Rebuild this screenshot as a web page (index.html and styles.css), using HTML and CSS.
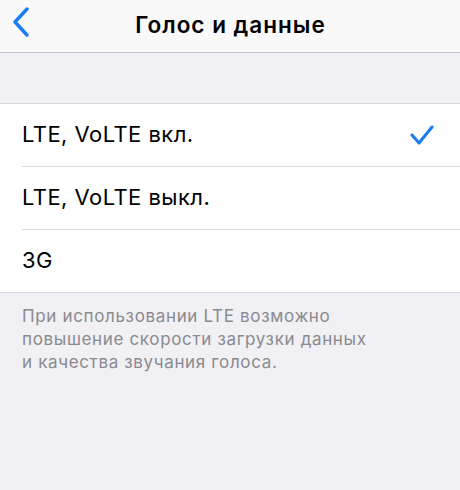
FILE: index.html
```
<!DOCTYPE html>
<html lang="ru">
<head>
    <meta charset="UTF-8">
    <meta name="viewport" content="width=device-width, initial-scale=1.0">
    <title>Голос и данные</title>
    <link rel="stylesheet" href="styles.css">
</head>
<body>
<div class="navbar">
    <a class="back" href="#">
        <svg width="20" height="30" viewBox="0 0 20 30">
            <path d="M16 2 L4 15 L16 28" fill="none" stroke="#1a7cf4" stroke-width="3.4" stroke-linecap="round" stroke-linejoin="round"/>
        </svg>
    </a>
    <div class="title">Голос и данные</div>
</div>

<div class="spacer"></div>

<div class="list">
    <div class="row">
        <span class="label">LTE, VoLTE вкл.</span>
        <svg class="check" width="24" height="24" viewBox="0 0 24 24">
            <path d="M2 12 L9 20 L22 4" fill="none" stroke="#1a7cf4" stroke-width="3" stroke-linecap="round" stroke-linejoin="round"/>
        </svg>
    </div>
    <div class="row">
        <span class="label">LTE, VoLTE выкл.</span>
    </div>
    <div class="row">
        <span class="label">3G</span>
    </div>
</div>

<div class="footer">
    При использовании LTE возможно<br>
    повышение скорости загрузки данных<br>
    и качества звучания голоса.
</div>
</body>
</html>
```

FILE: styles.css
```
body {
    margin: 0;
    padding: 0;
    background-color: #f0f0f5;
    font-family: Inter, "Noto Sans", sans-serif;
    height: 100vh;
}

.navbar {
    height: 52px;
    background-color: #f9f9fa;
    border-bottom: 1px solid #c4c4c8;
    display: flex;
    align-items: center;
    justify-content: center;
    position: relative;
}

.back {
    position: absolute;
    left: 11px;
    top: 7px;
}

.title {
    font-size: 22.5px;
    font-weight: 600;
    letter-spacing: 1px;
    color: #000;
    margin-left: 1px;
    margin-top: -4px;
}

.spacer {
    height: 50px;
}

.list {
    background-color: #fff;
    border-top: 1px solid #d8d8dc;
    border-bottom: 1px solid #d8d8dc;
    padding-left: 22px;
}

.row {
    height: 62px;
    display: flex;
    align-items: center;
    justify-content: space-between;
    padding-right: 26px;
    border-bottom: 1px solid #dcdce0;
}

.row:last-child {
    border-bottom: none;
}

.label {
    font-size: 22px;
    letter-spacing: 0.45px;
    color: #000;
    margin-top: -2px;
}

.footer {
    padding: 12px 22px 0 22px;
    font-size: 17px;
    line-height: 23px;
    letter-spacing: 0.65px;
    color: #8a8a8f;
}
```
